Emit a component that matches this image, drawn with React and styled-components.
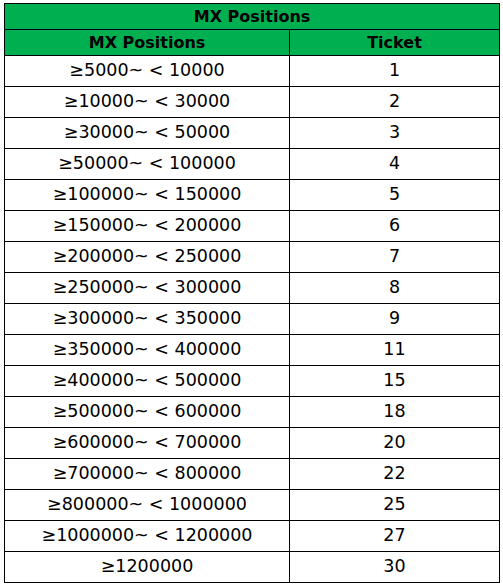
import React from 'react'
import styled, { createGlobalStyle } from 'styled-components'

const rows = [
  ['≥5000~ < 10000', '1'],
  ['≥10000~ < 30000', '2'],
  ['≥30000~ < 50000', '3'],
  ['≥50000~ < 100000', '4'],
  ['≥100000~ < 150000', '5'],
  ['≥150000~ < 200000', '6'],
  ['≥200000~ < 250000', '7'],
  ['≥250000~ < 300000', '8'],
  ['≥300000~ < 350000', '9'],
  ['≥350000~ < 400000', '11'],
  ['≥400000~ < 500000', '15'],
  ['≥500000~ < 600000', '18'],
  ['≥600000~ < 700000', '20'],
  ['≥700000~ < 800000', '22'],
  ['≥800000~ < 1000000', '25'],
  ['≥1000000~ < 1200000', '27'],
  ['≥1200000', '30'],
]

const Global = createGlobalStyle`
  body {
    margin: 0;
    background: #fff;
    font-family: "DejaVu Sans", "Open Sans", sans-serif;
    color: #000;
  }
`

const Sheet = styled.div`
  padding: 3px 0 0 4px;
`

const Table = styled.table`
  border-collapse: collapse;
  width: 495px;
  table-layout: fixed;
`

const HeadRow = styled.tr`
  height: 26px;
  background: #00b050;
`

const Row = styled.tr`
  height: 31px;
`

const Cell = styled.td`
  border: 1px solid #000;
  padding: 0;
  text-align: center;
  vertical-align: middle;
  font-size: ${(p) => (p.$bold ? '16px' : '17.5px')};
  font-weight: ${(p) => (p.$bold ? 700 : 400)};
  line-height: 1;
  white-space: nowrap;
`

export default function App() {
  return (
    <>
      <Global />
      <Sheet>
        <Table>
          <colgroup>
            <col style={{ width: 285 }} />
            <col style={{ width: 210 }} />
          </colgroup>
          <tbody>
            <HeadRow>
              <Cell $bold colSpan={2}>MX Positions</Cell>
            </HeadRow>
            <HeadRow>
              <Cell $bold>MX Positions</Cell>
              <Cell $bold>Ticket</Cell>
            </HeadRow>
            {rows.map(([range, ticket]) => (
              <Row key={range}>
                <Cell>{range}</Cell>
                <Cell>{ticket}</Cell>
              </Row>
            ))}
          </tbody>
        </Table>
      </Sheet>
    </>
  )
}
